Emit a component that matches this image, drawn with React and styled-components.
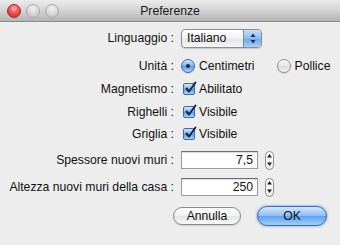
import React from "react";
import styled, { createGlobalStyle } from "styled-components";

const GlobalStyle = createGlobalStyle`
  html, body {
    margin: 0;
    padding: 0;
    background: #ededed;
  }
  body {
    font-family: "Liberation Sans", Arial, sans-serif;
    font-size: 12.2px;
    color: #111;
  }
`;

const Window = styled.div`
  width: 340px;
  height: 245px;
  display: flex;
  flex-direction: column;
  background: #ededed;
  overflow: hidden;
`;

const TitleBar = styled.div`
  height: 21px;
  flex: none;
  position: relative;
  display: flex;
  align-items: center;
  justify-content: center;
  background: linear-gradient(#ebebeb 0%, #d6d6d6 45%, #b3b3b3 100%);
  border-bottom: 1px solid #8c8c8c;
`;

const Lights = styled.div`
  position: absolute;
  left: 7px;
  top: 4px;
  display: flex;
  gap: 5px;
`;

const Light = styled.span`
  width: 12px;
  height: 12px;
  border-radius: 50%;
  border: 1px solid ${(p) => (p.$red ? "#a3262a" : "#a8a8a8")};
  background: ${(p) =>
    p.$red
      ? "radial-gradient(circle at 50% 30%, #ffb3b3 0%, #f05c5c 40%, #c81e22 100%)"
      : "radial-gradient(circle at 50% 30%, #f2f2f2 0%, #d8d8d8 50%, #bdbdbd 100%)"};
`;

const Title = styled.div`
  font-size: 12.2px;
  color: #1a1a1a;
`;

const Body = styled.div`
  display: flex;
  flex-direction: column;
`;

const Row = styled.div`
  display: grid;
  grid-template-columns: 174px 1fr;
  column-gap: 7px;
  align-items: center;
  height: 20px;
  margin-top: ${(p) => p.$gap}px;
`;

const Label = styled.div`
  text-align: right;
  white-space: nowrap;
`;

const Control = styled.div`
  display: flex;
  align-items: center;
`;

const Popup = styled.div`
  width: 79px;
  height: 17px;
  display: flex;
  border: 1px solid #8e8e8e;
  border-radius: 4px;
  overflow: hidden;
  background: linear-gradient(#ffffff, #f1f1f1 50%, #e4e4e4 51%, #f6f6f6);
  box-shadow: 0 1px 1px rgba(0, 0, 0, 0.15);
`;

const PopupText = styled.div`
  flex: 1;
  padding-left: 5px;
  line-height: 17px;
`;

const PopupArrows = styled.div`
  width: 17px;
  display: flex;
  align-items: center;
  justify-content: center;
  border-left: 1px solid #6c8fc4;
  background: linear-gradient(#c7def8, #8fbaf0 50%, #6aa2ea 51%, #a9d0fa);
`;

const Option = styled.label`
  display: flex;
  align-items: center;
  gap: 4px;
  margin-right: ${(p) => p.$spacing || 0}px;
`;

const Radio = styled.span`
  width: 12px;
  height: 12px;
  border-radius: 50%;
  display: flex;
  align-items: center;
  justify-content: center;
  border: 1px solid ${(p) => (p.$on ? "#3c6aa8" : "#8f8f8f")};
  background: ${(p) =>
    p.$on
      ? "linear-gradient(#d3e6fb, #7fb2ec 50%, #5c9be5 51%, #aad2fb)"
      : "linear-gradient(#fafafa, #e6e6e6 50%, #dadada 51%, #f4f4f4)"};
  box-shadow: 0 1px 1px rgba(0, 0, 0, 0.12);

  &::after {
    content: "";
    display: ${(p) => (p.$on ? "block" : "none")};
    width: 4px;
    height: 4px;
    border-radius: 50%;
    background: #162a4a;
  }
`;

const Box = styled.span`
  position: relative;
  width: 10px;
  height: 10px;
  margin-left: 2px;
  border: 1px solid #3c6aa8;
  border-radius: 2px;
  background: linear-gradient(#d3e6fb, #7fb2ec 50%, #5c9be5 51%, #aad2fb);

  svg {
    position: absolute;
    left: 0;
    top: -3px;
  }
`;

const Field = styled.div`
  width: 71px;
  height: 16px;
  padding-right: 4px;
  border: 1px solid #9a9a9a;
  border-top-color: #6e6e6e;
  background: #fff;
  box-shadow: inset 0 1px 1px rgba(0, 0, 0, 0.15);
  text-align: right;
  line-height: 17px;
`;

const Stepper = styled.div`
  margin-left: 7px;
  width: 9px;
  height: 19px;
  border: 1px solid #8e8e8e;
  border-radius: 5px;
  background: linear-gradient(#ffffff, #ececec);
  display: flex;
  flex-direction: column;
  align-items: center;
  justify-content: space-around;
  padding: 1px 0;
  box-sizing: border-box;
`;

const Buttons = styled.div`
  display: flex;
  justify-content: flex-end;
  gap: 16px;
  padding-right: 13px;
  margin-top: 9px;
`;

const Button = styled.div`
  width: ${(p) => p.$w}px;
  height: ${(p) => (p.$primary ? 18 : 16)}px;
  margin-top: ${(p) => (p.$primary ? 0 : 1)}px;
  border-radius: 10px;
  display: flex;
  align-items: center;
  justify-content: center;
  border: 1px solid ${(p) => (p.$primary ? "#3a68a8" : "#8a8a8a")};
  background: ${(p) =>
    p.$primary
      ? "linear-gradient(#d4e8fc, #8cbdf2 50%, #62a0ec 51%, #9fd0fb)"
      : "linear-gradient(#ffffff, #f2f2f2 50%, #e4e4e4 51%, #fafafa)"};
  box-shadow: ${(p) =>
    p.$primary ? "0 0 2px 1px rgba(60, 120, 200, 0.35)" : "0 1px 1px rgba(0,0,0,0.15)"};
`;

const Check = () => (
  <svg width="14" height="14" viewBox="0 0 14 14">
    <path d="M2.5 7.5 L5 10.5 L11.5 1.5" fill="none" stroke="#14284a" strokeWidth="2" strokeLinecap="round" strokeLinejoin="round" />
  </svg>
);

const UpDown = ({ color }) => (
  <svg width="6" height="11" viewBox="0 0 6 11">
    <path d="M3 0.5 L5.5 4 L0.5 4 Z" fill={color} />
    <path d="M3 10.5 L5.5 7 L0.5 7 Z" fill={color} />
  </svg>
);

const Arrow = ({ down }) => (
  <svg width="5" height="4" viewBox="0 0 5 4">
    <path d={down ? "M0 0.5 L5 0.5 L2.5 4 Z" : "M2.5 0 L5 3.5 L0 3.5 Z"} fill="#222" />
  </svg>
);

export default function App() {
  return (
    <Window>
      <GlobalStyle />
      <TitleBar>
        <Lights>
          <Light $red />
          <Light />
          <Light />
        </Lights>
        <Title>Preferenze</Title>
      </TitleBar>
      <Body>
        <Row $gap={6}>
          <Label>Linguaggio :</Label>
          <Control>
            <Popup>
              <PopupText>Italiano</PopupText>
              <PopupArrows>
                <UpDown color="#1d3355" />
              </PopupArrows>
            </Popup>
          </Control>
        </Row>
        <Row $gap={8}>
          <Label>Unità :</Label>
          <Control>
            <Option $spacing={22}>
              <Radio $on />
              Centimetri
            </Option>
            <Option>
              <Radio />
              Pollice
            </Option>
          </Control>
        </Row>
        <Row $gap={3}>
          <Label>Magnetismo :</Label>
          <Control>
            <Option>
              <Box><Check /></Box>
              Abilitato
            </Option>
          </Control>
        </Row>
        <Row $gap={3}>
          <Label>Righelli :</Label>
          <Control>
            <Option>
              <Box><Check /></Box>
              Visibile
            </Option>
          </Control>
        </Row>
        <Row $gap={2}>
          <Label>Griglia :</Label>
          <Control>
            <Option>
              <Box><Check /></Box>
              Visibile
            </Option>
          </Control>
        </Row>
        <Row $gap={6}>
          <Label>Spessore nuovi muri :</Label>
          <Control>
            <Field>7,5</Field>
            <Stepper>
              <Arrow />
              <Arrow down />
            </Stepper>
          </Control>
        </Row>
        <Row $gap={7}>
          <Label>Altezza nuovi muri della casa :</Label>
          <Control>
            <Field>250</Field>
            <Stepper>
              <Arrow />
              <Arrow down />
            </Stepper>
          </Control>
        </Row>
        <Buttons>
          <Button $w={66}>Annulla</Button>
          <Button $w={68} $primary>OK</Button>
        </Buttons>
      </Body>
    </Window>
  );
}
